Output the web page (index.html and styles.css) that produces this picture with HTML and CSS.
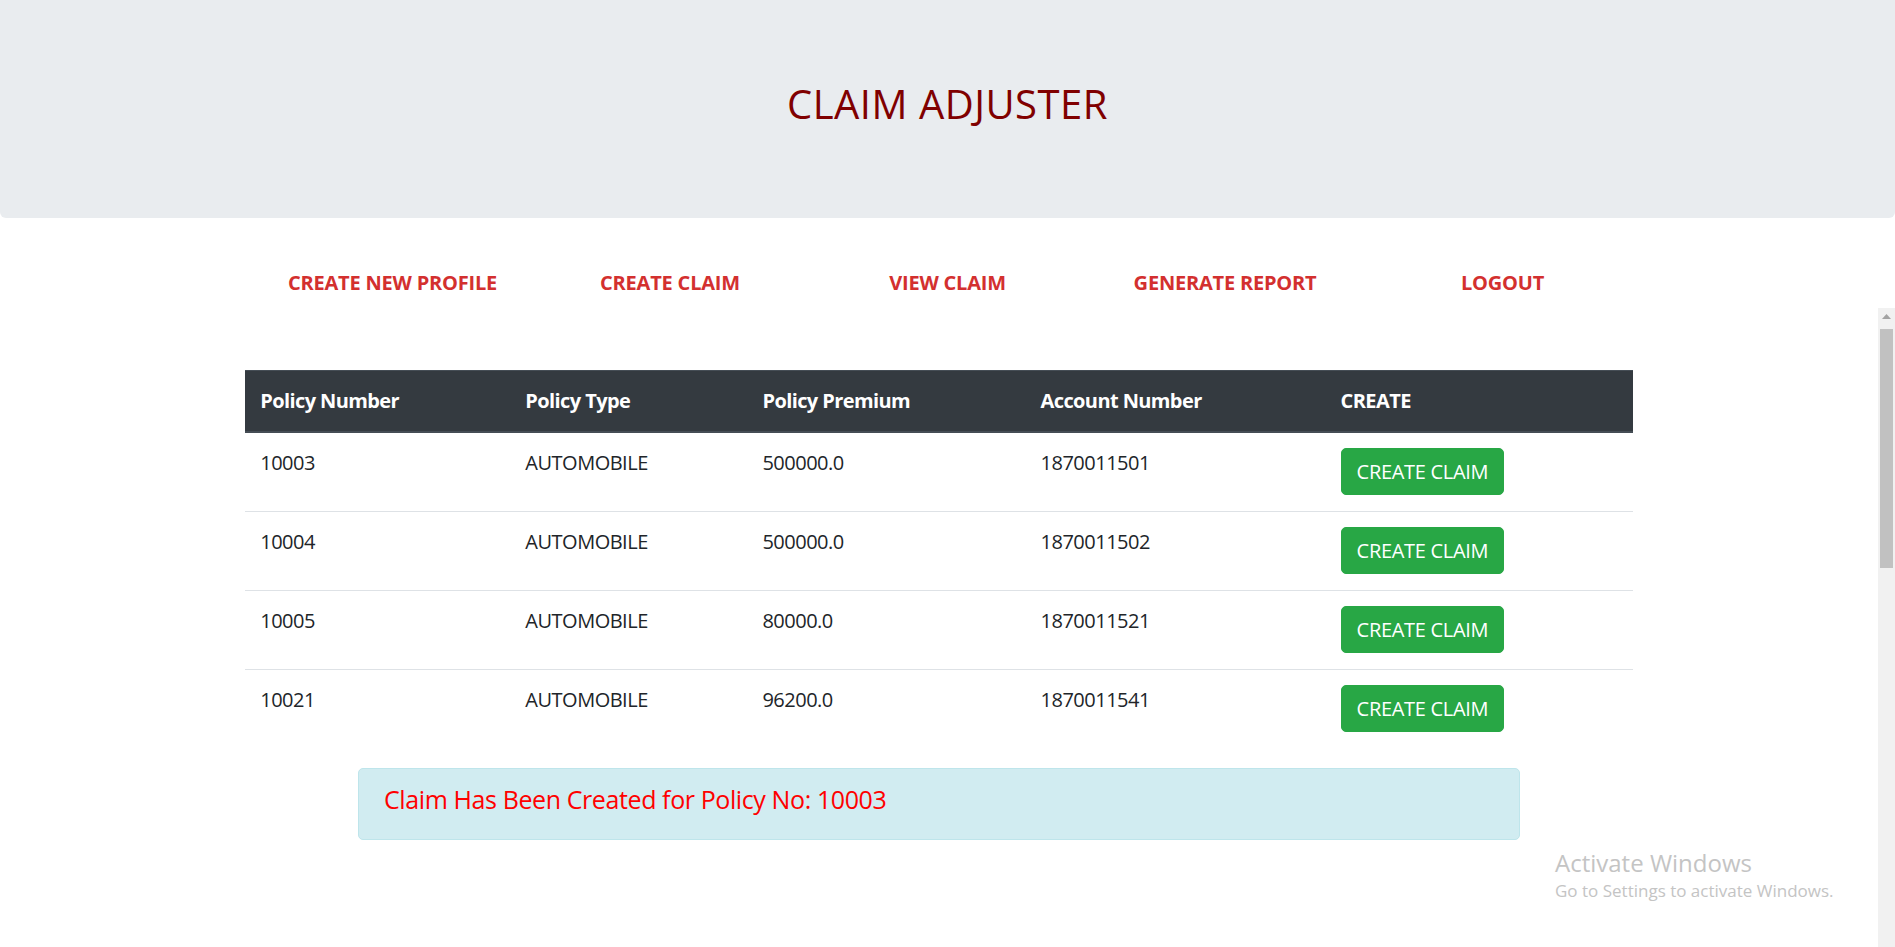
FILE: index.html
```html
<!DOCTYPE html>
<html lang="en">
<head>
<meta charset="utf-8">
<title>Claim Adjuster</title>
<link rel="stylesheet" href="styles.css">
</head>
<body>
<header class="jumbotron">
  <h1 class="title">CLAIM ADJUSTER</h1>
</header>
<nav class="topnav">
  <a class="nav-link" href="#">CREATE NEW PROFILE</a>
  <a class="nav-link" href="#">CREATE CLAIM</a>
  <a class="nav-link" href="#">VIEW CLAIM</a>
  <a class="nav-link" href="#">GENERATE REPORT</a>
  <a class="nav-link" href="#">LOGOUT</a>
</nav>
<div class="lower">
  <main class="content">
    <div class="container">
      <table class="table">
        <colgroup>
          <col class="c1"><col class="c2"><col class="c3"><col class="c4"><col class="c5">
        </colgroup>
        <thead>
          <tr><th>Policy Number</th><th>Policy Type</th><th>Policy Premium</th><th>Account Number</th><th>CREATE</th></tr>
        </thead>
        <tbody>
          <tr><td>10003</td><td>AUTOMOBILE</td><td>500000.0</td><td>1870011501</td><td><button class="btn">CREATE CLAIM</button></td></tr>
          <tr><td>10004</td><td>AUTOMOBILE</td><td>500000.0</td><td>1870011502</td><td><button class="btn">CREATE CLAIM</button></td></tr>
          <tr><td>10005</td><td>AUTOMOBILE</td><td>80000.0</td><td>1870011521</td><td><button class="btn">CREATE CLAIM</button></td></tr>
          <tr><td>10021</td><td>AUTOMOBILE</td><td>96200.0</td><td>1870011541</td><td><button class="btn">CREATE CLAIM</button></td></tr>
        </tbody>
      </table>
    </div>
    <div class="alert">
      <h5 class="alert-text">Claim Has Been Created for Policy No: 10003</h5>
    </div>
  </main>
  <div class="scrollbar">
    <div class="sb-up"><svg width="9" height="5" viewBox="0 0 9 5"><path d="M0 5 L4.5 0 L9 5 Z" fill="#a3a3a3"/></svg></div>
    <div class="sb-thumb"></div>
  </div>
</div>
<div class="watermark">
  <div class="wm-title">Activate Windows</div>
  <div class="wm-sub">Go to Settings to activate Windows.</div>
</div>
</body>
</html>
```
FILE: styles.css
```css
* { box-sizing: border-box; }
html, body {
  margin: 0;
  height: 947px;
  overflow: hidden;
}
body {
  font-family: "Segoe UI", "Open Sans", sans-serif;
  font-size: 20px;
  line-height: 1.5;
  color: #212529;
  background: #fff;
  position: relative;
}
.jumbotron {
  background: #e9ecef;
  padding: 80px 40px;
  margin-bottom: 40px;
  border-radius: 0 0 6px 6px;
  text-align: center;
}
.title {
  margin: 0 0 10px;
  font-size: 40px;
  font-weight: 400;
  line-height: 1.2;
  letter-spacing: 0.5px;
  color: #800000;
}
.topnav {
  width: 1387.5px;
  margin: 0 auto;
  display: grid;
  grid-template-columns: repeat(5, 1fr);
}
.nav-link {
  display: block;
  padding: 10px 0;
  text-align: center;
  color: #d3302f;
  font-weight: 700;
  letter-spacing: -0.2px;
  text-decoration: none;
}
.lower {
  display: flex;
  height: 640px;
}
.content {
  flex: 1;
  padding-top: 62px;
}
.container {
  width: 1425px;
  margin: 0 auto;
  padding: 0 18.75px;
}
.table {
  width: 100%;
  border-collapse: collapse;
  table-layout: fixed;
  margin-bottom: 20px;
}
.c1 { width: 265px; }
.c2 { width: 237px; }
.c3 { width: 278px; }
.c4 { width: 300px; }
.c5 { width: 307px; }
.table th, .table td {
  padding: 15px 15px 16px;
  text-align: left;
  vertical-align: top;
  border-top: 1px solid #dee2e6;
  letter-spacing: -0.5px;
}
.table thead th {
  padding: 15px;
  background: #343a40;
  color: #fff;
  font-weight: 700;
  letter-spacing: -0.6px;
  border-top: 1px solid #454d55;
  border-bottom: 2px solid #454d55;
}
.btn {
  font-family: inherit;
  font-size: 20px;
  line-height: 30px;
  letter-spacing: -0.3px;
  padding: 7.5px 15px;
  color: #fff;
  background: #28a745;
  border: 1px solid #28a745;
  border-radius: 5px;
  cursor: pointer;
}
.alert {
  width: 1162px;
  margin: 0 auto;
  padding: 15px 25px;
  background: #d1ecf1;
  border: 1px solid #bee5eb;
  border-radius: 5px;
}
.alert-text {
  margin: 0 0 10px;
  font-size: 25px;
  font-weight: 400;
  line-height: 1.2;
  letter-spacing: -0.4px;
  color: #ff0000;
}
.scrollbar {
  width: 17px;
  background: #f1f1f1;
  display: flex;
  flex-direction: column;
  align-items: center;
}
.sb-up {
  height: 17px;
  width: 17px;
  display: flex;
  align-items: center;
  justify-content: center;
}
.sb-thumb {
  margin-top: 4px;
  width: 13px;
  height: 239px;
  background: #c1c1c1;
}
.watermark {
  position: absolute;
  left: 1555px;
  top: 846px;
  color: #c4c4c4;
  pointer-events: none;
}
.wm-title {
  font-size: 24px;
  line-height: 34px;
}
.wm-sub {
  font-size: 17px;
  line-height: 22px;
}
```
